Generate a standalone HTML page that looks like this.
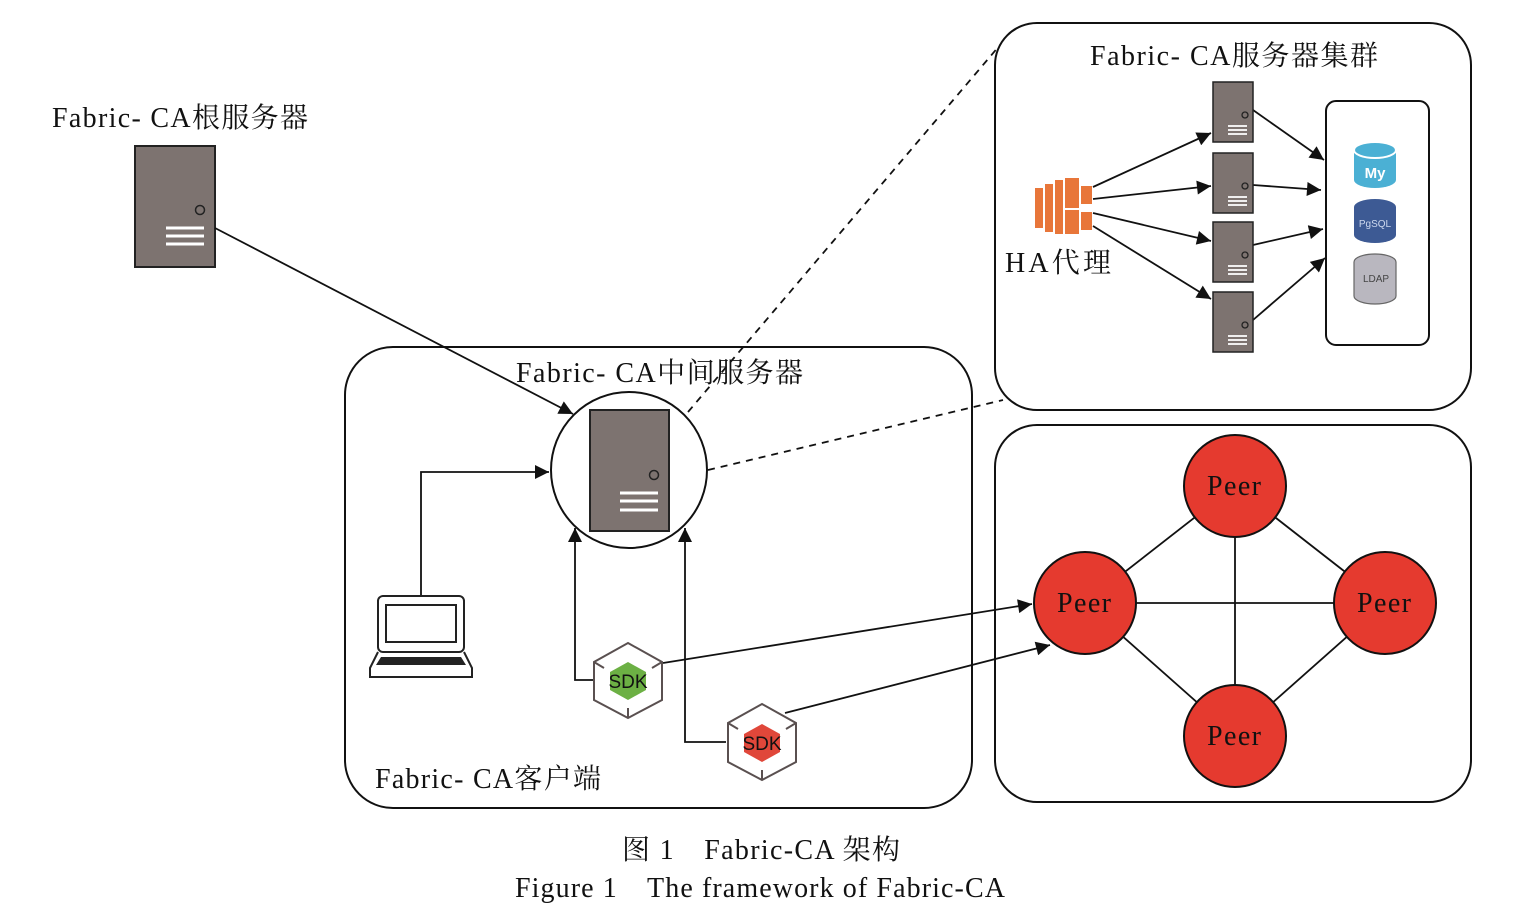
<!DOCTYPE html>
<html><head><meta charset="utf-8"><style>
html,body{margin:0;padding:0;background:#fff;width:1540px;height:914px;overflow:hidden}
svg{display:block}
.s{font-family:"Liberation Serif","Noto Serif CJK SC",serif;fill:#111}
.ss{font-family:"Liberation Sans",sans-serif}
</style></head><body>
<svg width="1540" height="914" viewBox="0 0 1540 914" xmlns="http://www.w3.org/2000/svg">
<defs>
<marker id="a" viewBox="0 0 10 10" refX="10" refY="5" markerWidth="26" markerHeight="14" markerUnits="userSpaceOnUse" orient="auto"><path d="M0,0 L10,5 L0,10 z" fill="#111"/></marker>
<g id="srv"><rect x="0" y="0" width="40" height="60" fill="#7d7370" stroke="#222" stroke-width="1.5"/><circle cx="32" cy="33" r="3" fill="none" stroke="#222" stroke-width="1.3"/><path d="M15,44h19M15,48h19M15,52h19" stroke="#fff" stroke-width="1.8"/></g>
</defs>
<g fill="none" stroke="#111" stroke-width="2">
<rect x="345" y="347" width="627" height="461" rx="48"/>
<rect x="995" y="23" width="476" height="387" rx="42"/>
<rect x="995" y="425" width="476" height="377" rx="42"/>
<rect x="1326" y="101" width="103" height="244" rx="10"/>
<circle cx="629" cy="470" r="78"/>
</g>
<rect x="135" y="146" width="80" height="121" fill="#7d7370" stroke="#222" stroke-width="2"/>
<circle cx="200" cy="210" r="4.5" fill="none" stroke="#222" stroke-width="1.5"/>
<path d="M166,228h38M166,236h38M166,244h38" stroke="#fff" stroke-width="3"/>
<rect x="590" y="410" width="79" height="121" fill="#7d7370" stroke="#222" stroke-width="2"/>
<circle cx="654" cy="475" r="4.5" fill="none" stroke="#222" stroke-width="1.5"/>
<path d="M620,493h38M620,501h38M620,510h38" stroke="#fff" stroke-width="3"/>
<g class="s" font-size="28">
<text x="52" y="127" textLength="256" lengthAdjust="spacing">Fabric- CA根服务器</text>
<text x="516" y="382" textLength="287" lengthAdjust="spacing">Fabric- CA中间服务器</text>
<text x="1090" y="65" textLength="288" lengthAdjust="spacing">Fabric- CA服务器集群</text>
<text x="1005" y="272" textLength="106" lengthAdjust="spacing">HA代理</text>
<text x="375" y="788" textLength="226" lengthAdjust="spacing">Fabric- CA客户端</text>
</g>
<g stroke="#111" stroke-width="1.8" fill="none">
<line x1="215" y1="228" x2="573" y2="414" marker-end="url(#a)"/>
<polyline points="421,596 421,472 549,472" marker-end="url(#a)"/>
<polyline points="593,680 575,680 575,528" marker-end="url(#a)"/>
<polyline points="726,742 685,742 685,528" marker-end="url(#a)"/>
<line x1="663" y1="663" x2="1032" y2="604" marker-end="url(#a)"/>
<line x1="785" y1="713" x2="1050" y2="645" marker-end="url(#a)"/>
<line x1="688" y1="412" x2="1000" y2="45" stroke-dasharray="7,6"/>
<line x1="708" y1="470" x2="1003" y2="400" stroke-dasharray="7,6"/>
<line x1="1093" y1="187" x2="1211" y2="133" marker-end="url(#a)"/>
<line x1="1093" y1="199" x2="1211" y2="186" marker-end="url(#a)"/>
<line x1="1093" y1="213" x2="1211" y2="241" marker-end="url(#a)"/>
<line x1="1093" y1="226" x2="1211" y2="299" marker-end="url(#a)"/>
<line x1="1253" y1="110" x2="1324" y2="160" marker-end="url(#a)"/>
<line x1="1253" y1="185" x2="1321" y2="190" marker-end="url(#a)"/>
<line x1="1253" y1="245" x2="1323" y2="229" marker-end="url(#a)"/>
<line x1="1253" y1="320" x2="1325" y2="258" marker-end="url(#a)"/>
<line x1="1235" y1="486" x2="1235" y2="736"/>
<line x1="1085" y1="603" x2="1385" y2="603"/>
<line x1="1235" y1="486" x2="1085" y2="603"/>
<line x1="1235" y1="486" x2="1385" y2="603"/>
<line x1="1085" y1="603" x2="1235" y2="736"/>
<line x1="1385" y1="603" x2="1235" y2="736"/>
</g>
<use href="#srv" x="1213" y="82"/>
<use href="#srv" x="1213" y="153"/>
<use href="#srv" x="1213" y="222"/>
<use href="#srv" x="1213" y="292"/>
<g fill="#e8763a">
<rect x="1035" y="188" width="8" height="40"/><rect x="1045" y="184" width="8" height="48"/><rect x="1055" y="180" width="8" height="54"/>
<rect x="1065" y="178" width="14" height="30"/><rect x="1065" y="210" width="14" height="24"/>
<rect x="1081" y="186" width="11" height="18"/><rect x="1081" y="212" width="11" height="18"/>
</g>
<path d="M1354,150 v30 a21,8 0 0 0 42,0 v-30 z" fill="#4bb0d4"/><ellipse cx="1375" cy="150" rx="21" ry="8" fill="#4bb0d4" stroke="#fff" stroke-width="2"/>
<text x="1375" y="178" font-size="15" class="ss" font-weight="bold" text-anchor="middle" fill="#fff">My</text>
<path d="M1354,207 a21,8 0 0 1 42,0 v28 a21,8 0 0 1 -42,0 z" fill="#3d5a94"/>
<text x="1375" y="227" font-size="10" class="ss" text-anchor="middle" fill="#cdd8ee">PgSQL</text>
<path d="M1354,262 a21,8 0 0 1 42,0 v34 a21,8 0 0 1 -42,0 z" fill="#b9b7bf" stroke="#666" stroke-width="1.2"/>
<text x="1376" y="282" font-size="10" class="ss" text-anchor="middle" fill="#444">LDAP</text>
<g fill="none" stroke="#222" stroke-width="2">
<rect x="378" y="596" width="86" height="56" rx="5"/>
<rect x="386" y="605" width="70" height="37"/>
<path d="M378,652 L370,668 V677 H472 V668 L464,652"/>
</g>
<path d="M381,657 H461 L466,665 H376 z" fill="#222"/>
<g>
<path d="M628,662 l18,10 v18 l-18,10 l-18,-10 v-18 z" fill="#6cb044"/>
<path d="M628,643 L662,662 V700 L628,718 L594,700 V662 Z M594,662 L604,668 M662,662 L652,668 M628,718 V708" fill="none" stroke="#5a5050" stroke-width="2"/>
<text x="628" y="688" font-size="19" class="ss" fill="#111" text-anchor="middle">SDK</text>
</g>
<g>
<path d="M762,724 l18,10 v18 l-18,10 l-18,-10 v-18 z" fill="#e0473a"/>
<path d="M762,704 L796,723 V762 L762,780 L728,762 V723 Z M728,723 L738,729 M796,723 L786,729 M762,780 V770" fill="none" stroke="#5a5050" stroke-width="2"/>
<text x="762" y="750" font-size="19" class="ss" fill="#111" text-anchor="middle">SDK</text>
</g>
<g fill="#e53a2f" stroke="#111" stroke-width="2">
<circle cx="1235" cy="486" r="51"/><circle cx="1085" cy="603" r="51"/><circle cx="1385" cy="603" r="51"/><circle cx="1235" cy="736" r="51"/>
</g>
<g class="s" font-size="28">
<text x="1207" y="495" textLength="54">Peer</text><text x="1057" y="612" textLength="54">Peer</text><text x="1357" y="612" textLength="54">Peer</text><text x="1207" y="745" textLength="54">Peer</text>
<text x="622" y="859" textLength="278" lengthAdjust="spacing">图 1　Fabric-CA 架构</text>
<text x="515" y="897" textLength="490" lengthAdjust="spacing">Figure 1　The framework of Fabric-CA</text>
</g>
</svg>
</body></html>
